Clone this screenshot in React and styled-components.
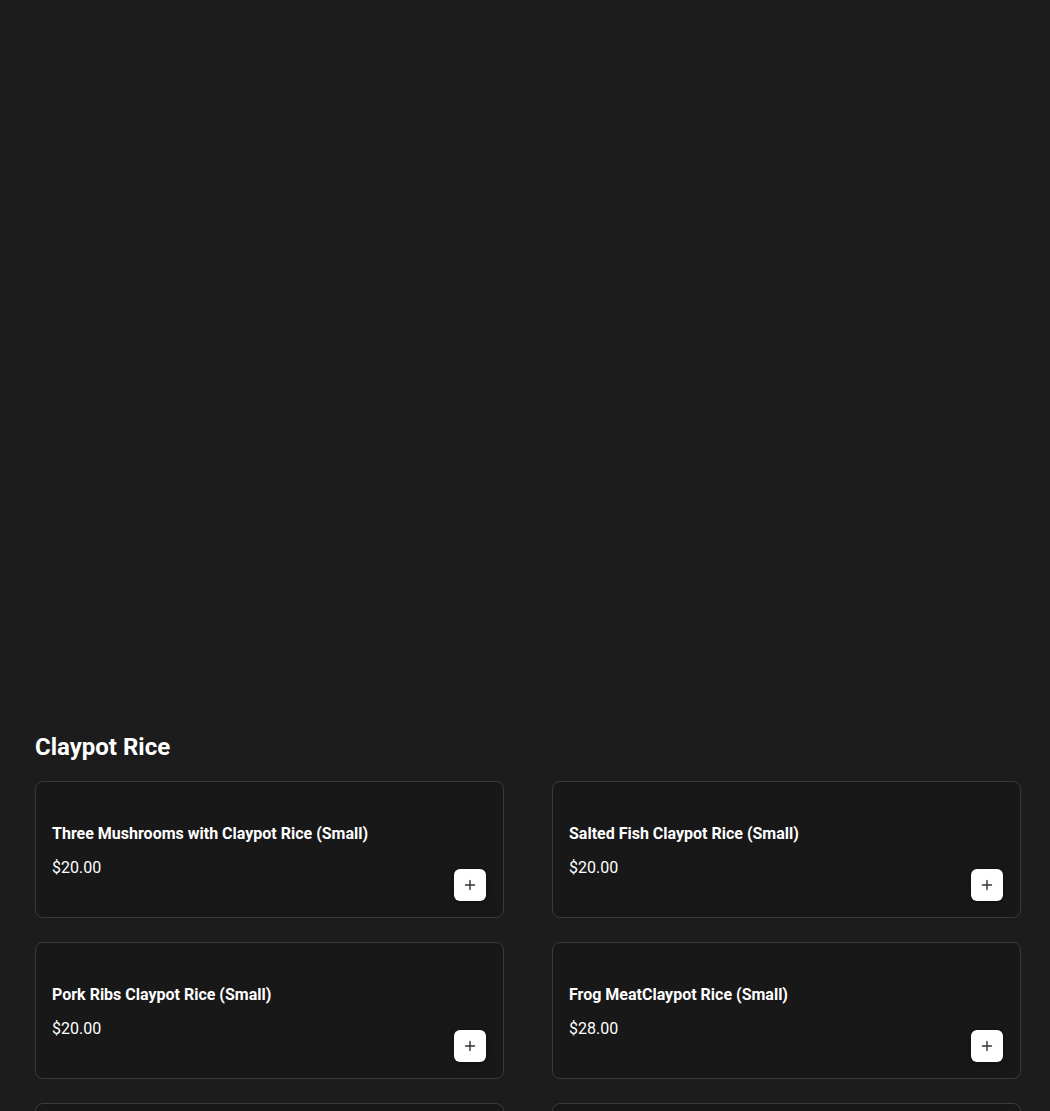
import React from "react";
import styled, { createGlobalStyle } from "styled-components";

const Global = createGlobalStyle`
  html, body { margin: 0; padding: 0; background: #1c1c1c; }
  body { font-family: Roboto, "Noto Sans", Arial, sans-serif; color: #fff; }
  * { box-sizing: border-box; }
`;

const Page = styled.div`
  min-height: 1111px;
  background: #1c1c1c;
`;

const Hero = styled.div`
  height: 733px;
`;

const Section = styled.section`
  padding: 0 29px 0 35px;
`;

const Heading = styled.h2`
  margin: 0 0 20px;
  font-size: 24px;
  line-height: 28px;
  font-weight: 700;
  color: #fff;
`;

const Grid = styled.div`
  display: grid;
  grid-template-columns: repeat(2, 1fr);
  column-gap: 48px;
  row-gap: 24px;
`;

const Card = styled.div`
  background: #181818;
  border: 1px solid #3a3a3a;
  border-radius: 8px;
  padding: 41px 17px 16px 16px;
  display: flex;
  flex-direction: column;
`;

const Title = styled.div`
  font-size: 16px;
  line-height: 22px;
  font-weight: 700;
  color: #fff;
  margin-bottom: 12px;
`;

const Row = styled.div`
  display: flex;
  justify-content: space-between;
  align-items: flex-start;
`;

const Price = styled.div`
  font-size: 16px;
  line-height: 22px;
  font-weight: 400;
  color: #fff;
`;

const AddButton = styled.button`
  margin-top: 12px;
  width: 32px;
  height: 32px;
  border: none;
  border-radius: 6px;
  background: #fff;
  box-shadow: 0 1px 4px rgba(0, 0, 0, 0.5);
  display: flex;
  align-items: center;
  justify-content: center;
  padding: 0;
  cursor: pointer;
`;

const Plus = () => (
  <svg width="12" height="12" viewBox="0 0 12 12" fill="none">
    <path d="M6 1.5v9M1.5 6h9" stroke="#333" strokeWidth="1.4" strokeLinecap="round" />
  </svg>
);

const items = [
  { name: "Three Mushrooms with Claypot Rice (Small)", price: "$20.00" },
  { name: "Salted Fish Claypot Rice (Small)", price: "$20.00" },
  { name: "Pork Ribs Claypot Rice (Small)", price: "$20.00" },
  { name: "Frog MeatClaypot Rice (Small)", price: "$28.00" },
  { name: "Chicken Claypot Rice (Small)", price: "$20.00" },
  { name: "Preserved Meat Claypot Rice (Small)", price: "$22.00" },
];

export default function App() {
  return (
    <Page>
      <Global />
      <Hero />
      <Section>
        <Heading>Claypot Rice</Heading>
        <Grid>
          {items.map((it) => (
            <Card key={it.name}>
              <Title>{it.name}</Title>
              <Row>
                <Price>{it.price}</Price>
                <AddButton aria-label="Add">
                  <Plus />
                </AddButton>
              </Row>
            </Card>
          ))}
        </Grid>
      </Section>
    </Page>
  );
}
